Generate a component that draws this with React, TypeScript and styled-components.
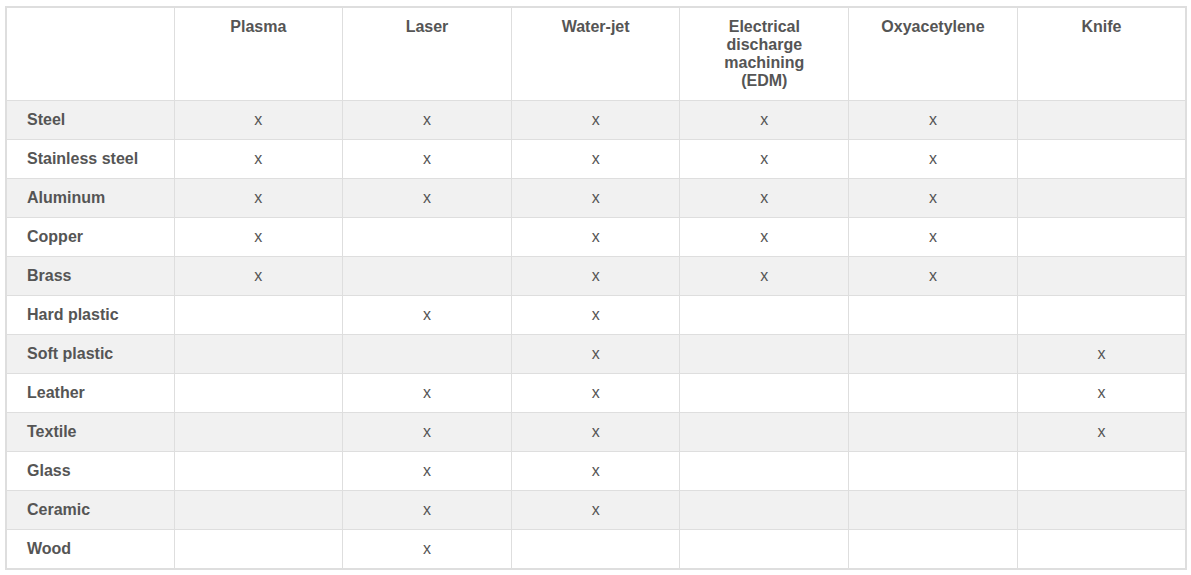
import styled, { createGlobalStyle } from "styled-components";

const methods = [
  "Plasma",
  "Laser",
  "Water-jet",
  "Electrical discharge machining (EDM)",
  "Oxyacetylene",
  "Knife",
];

// each row: material, then which methods can cut it (in the order above)
const materials: [string, boolean[]][] = [
  ["Steel", [true, true, true, true, true, false]],
  ["Stainless steel", [true, true, true, true, true, false]],
  ["Aluminum", [true, true, true, true, true, false]],
  ["Copper", [true, false, true, true, true, false]],
  ["Brass", [true, false, true, true, true, false]],
  ["Hard plastic", [false, true, true, false, false, false]],
  ["Soft plastic", [false, false, true, false, false, true]],
  ["Leather", [false, true, true, false, false, true]],
  ["Textile", [false, true, true, false, false, true]],
  ["Glass", [false, true, true, false, false, false]],
  ["Ceramic", [false, true, true, false, false, false]],
  ["Wood", [false, true, false, false, false, false]],
];

const App = () => {
  return (
    <Page>
      <GlobalStyle />
      <Table>
        <colgroup>
          <col style={{ width: 168 }} />
          {methods.map((m) => (
            <col key={m} />
          ))}
        </colgroup>
        <thead>
          <tr>
            <HeadCell />
            {methods.map((m) => (
              <HeadCell key={m}>{m}</HeadCell>
            ))}
          </tr>
        </thead>
        <tbody>
          {materials.map(([name, marks], i) => (
            <Row key={name} $striped={i % 2 === 0} $last={i === materials.length - 1}>
              <LabelCell>{name}</LabelCell>
              {marks.map((on, j) => (
                <MarkCell key={j}>{on ? "x" : ""}</MarkCell>
              ))}
            </Row>
          ))}
        </tbody>
      </Table>
    </Page>
  );
};

export default App;

const GlobalStyle = createGlobalStyle`
  body {
    margin: 0;
    background: #fff;
    font-family: "Liberation Sans", Arial, sans-serif;
  }
`;

const Page = styled.div`
  padding: 6px 4px 0 5px;
`;

const Table = styled.table`
  width: 1182px;
  table-layout: fixed;
  border-collapse: collapse;
  border: 2px solid #dedede;
  color: #555;
  font-size: 16px;
`;

const HeadCell = styled.th`
  height: 93px;
  padding: 10px 20px 0;
  vertical-align: top;
  text-align: center;
  font-weight: bold;
  line-height: 18px;
  border: 1px solid #dedede;
  box-sizing: border-box;
`;

const Row = styled.tr<{ $striped: boolean; $last: boolean }>`
  height: ${(p) => (p.$last ? "40px" : "39px")};
  background: ${(p) => (p.$striped ? "#f1f1f1" : "#fff")};
`;

const LabelCell = styled.td`
  padding: 0 20px;
  font-weight: bold;
  border: 1px solid #dedede;
  vertical-align: middle;
`;

const MarkCell = styled.td`
  text-align: center;
  border: 1px solid #dedede;
  vertical-align: middle;
`;
